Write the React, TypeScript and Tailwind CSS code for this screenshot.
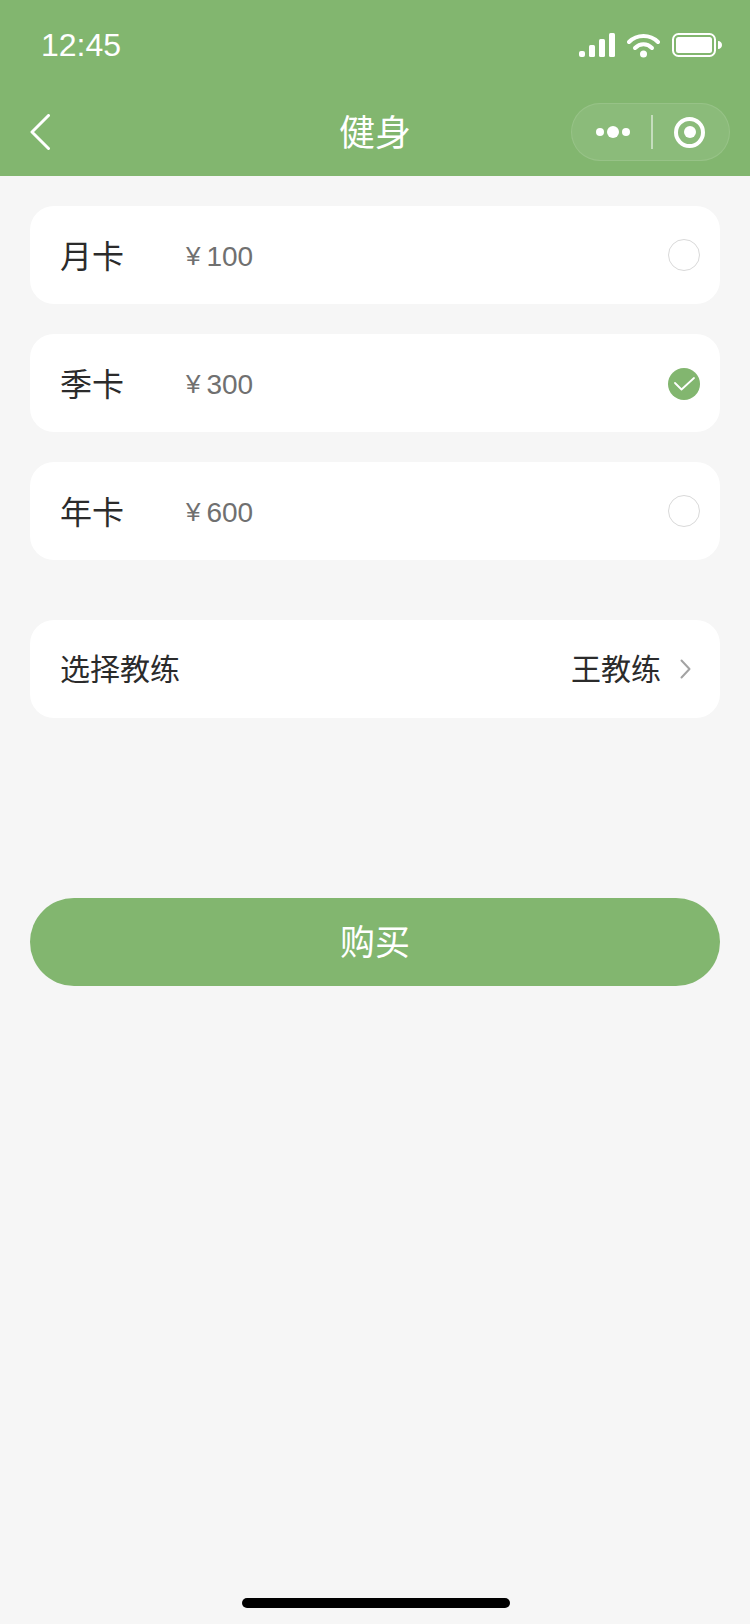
const cjk = "font-['Liberation_Sans','Noto_Sans_CJK_SC',sans-serif]";

const plans = [
  { name: '月卡', price: '100', checked: false },
  { name: '季卡', price: '300', checked: true },
  { name: '年卡', price: '600', checked: false },
];

function StatusIcons() {
  return (
    <div className="flex items-center gap-[12px]">
      <svg width="36" height="24" viewBox="0 0 36 24" fill="#fff">
        <rect x="0" y="18" width="6" height="6" rx="2" />
        <rect x="10" y="12" width="6" height="12" rx="1.5" />
        <rect x="20" y="6" width="6" height="18" rx="1.5" />
        <rect x="30" y="0" width="6" height="24" rx="1.5" />
      </svg>
      <svg width="33" height="25" viewBox="0 0 33 25" fill="none" stroke="#fff" strokeWidth="4" strokeLinecap="round">
        <path d="M2 9C10 1 23 1 31 9" />
        <path d="M8 15C13 10 20 10 25 15" />
        <circle cx="16.5" cy="21" r="3.5" fill="#fff" stroke="none" />
      </svg>
      <svg width="50" height="24" viewBox="0 0 50 24" fill="none">
        <rect x="1" y="1" width="42" height="22" rx="5.5" stroke="#fff" strokeWidth="2" />
        <rect x="4" y="4" width="36" height="16" rx="2.5" fill="#fff" />
        <path d="M46 8C48.500 8 50 10 50 12C50 14 48.500 16 46 16Z" fill="#fff" />
      </svg>
    </div>
  );
}

function Capsule() {
  return (
    <div className="flex items-center w-[159px] h-[58px] rounded-full border border-white/10 bg-white/[0.08]">
      <div className="flex-1 flex items-center justify-center gap-[3px] pl-[4px]">
        <span className="w-2 h-2 rounded-full bg-white" />
        <span className="w-3 h-3 rounded-full bg-white" />
        <span className="w-2 h-2 rounded-full bg-white" />
      </div>
      <div className="w-[2px] h-[34px] bg-white/50" />
      <div className="flex-1 flex items-center justify-center pr-[2px]">
        <div className="w-[31px] h-[31px] rounded-full border-[4px] border-white flex items-center justify-center">
          <span className="w-3 h-3 rounded-full bg-white" />
        </div>
      </div>
    </div>
  );
}

export default function App() {
  return (
    <div className={`relative w-[750px] h-[1624px] bg-[#f6f6f6] flex flex-col ${cjk}`}>
      {/* header */}
      <div className="h-[176px] bg-[#82b66f] text-white">
        <div className="h-[88px] flex items-center justify-between pl-[41px] pr-[28px] pt-[2px]">
          <span className="text-[32px] leading-none">12:45</span>
          <StatusIcons />
        </div>
        <div className="h-[88px] flex items-center pr-[20px] pl-[30px]">
          <div className="w-[149px]">
            <svg className="block" width="20" height="36" viewBox="0 0 20 36" fill="none" stroke="#fff" strokeWidth="3" strokeLinecap="round" strokeLinejoin="round">
              <path d="M18.500 1.500L2 18L18.500 34.500" />
            </svg>
          </div>
          <div className="flex-1 pt-[4px] text-center text-[36px] leading-none font-normal">健身</div>
          <Capsule />
        </div>
      </div>

      {/* plans */}
      <div className="flex flex-col gap-[30px] px-[30px] pt-[30px]">
        {plans.map((plan) => (
          <div key={plan.name} className="h-[98px] bg-white rounded-[24px] flex items-center pl-[30px] pr-[20px]">
            <span className="w-[126px] pt-[3px] text-[32px] text-[#2b2b2b]">{plan.name}</span>
            <span className="flex-1 pt-[3px] text-[28px] text-[#707070] flex items-center gap-[6px]">
              <span className="text-[26px]">¥</span>
              {plan.price}
            </span>
            {plan.checked ? (
              <div className="w-8 h-8 mt-[1px] rounded-full bg-[#82b66f] flex items-center justify-center">
                <svg width="21" height="14" viewBox="0 0 21 14" fill="none" stroke="#fff" strokeWidth="1.800" strokeLinecap="round" strokeLinejoin="round">
                  <path d="M1 6L7.500 12.500L20 1" />
                </svg>
              </div>
            ) : (
              <div className="w-8 h-8 rounded-full border border-[#d9d9d9]" />
            )}
          </div>
        ))}
      </div>

      {/* coach */}
      <div className="px-[30px] mt-[60px]">
        <div className="h-[98px] bg-white rounded-[24px] flex items-center justify-between pl-[30px] pr-[29px] text-[30px] text-[#2b2b2b]">
          <span>选择教练</span>
          <div className="flex items-center gap-[19px]">
            <span>王教练</span>
            <svg width="11" height="20" viewBox="0 0 11 20" fill="none" stroke="#a3a3a3" strokeWidth="2" strokeLinecap="round" strokeLinejoin="round">
              <path d="M1.500 1.500L9.500 10L1.500 18.500" />
            </svg>
          </div>
        </div>
      </div>

      {/* buy */}
      <div className="px-[30px] mt-[180px]">
        <button className="w-full h-[88px] pt-[2px] rounded-full bg-[#82b66f] text-white text-[35px]">购买</button>
      </div>

      {/* home indicator */}
      <div className="absolute bottom-[16px] left-[242px] w-[268px] h-[10px] rounded-full bg-black" />
    </div>
  );
}
